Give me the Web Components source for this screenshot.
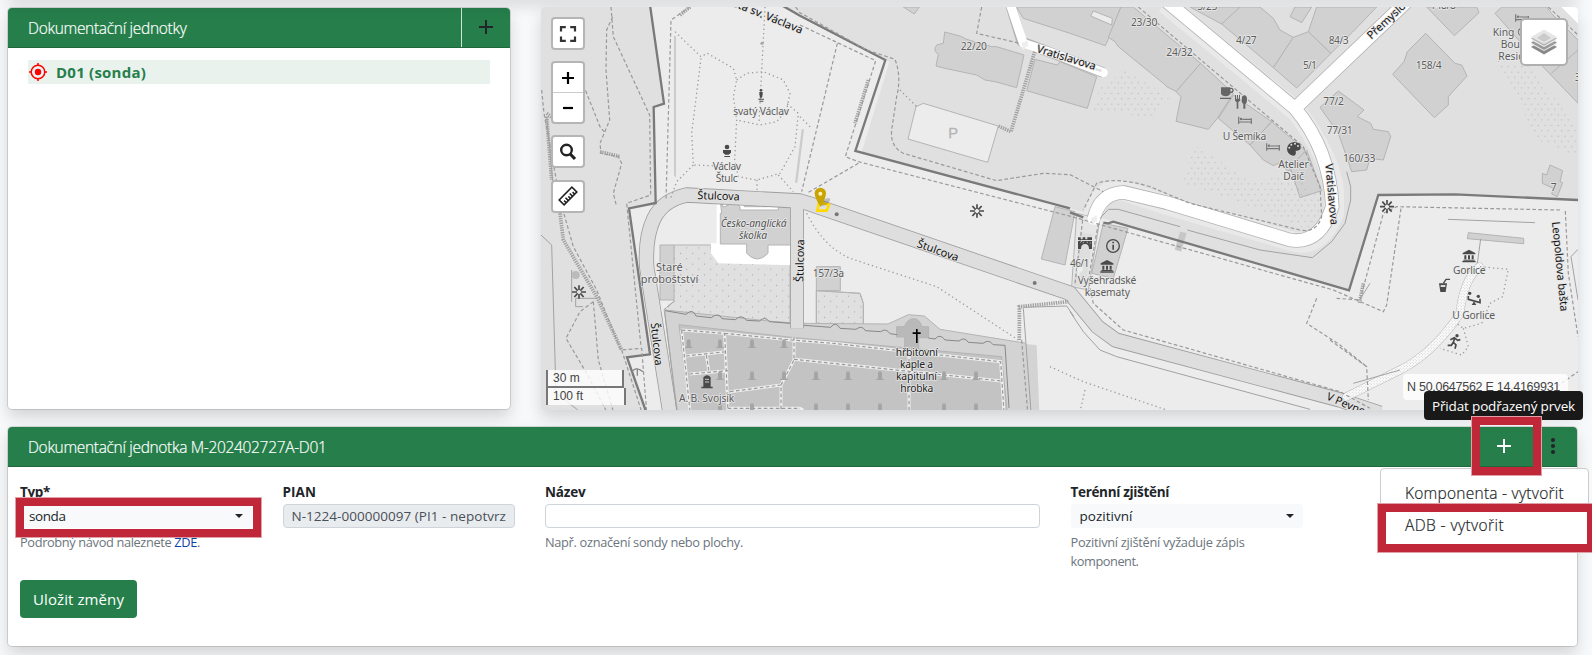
<!DOCTYPE html>
<html lang="cs">
<head>
<meta charset="utf-8">
<title>Dokumentační jednotky</title>
<style>
html,body{margin:0;height:100%}
body{background:#f8f9fa;font-family:"Open Sans","Noto Sans",sans-serif;color:#212529;overflow:hidden}
</style>
</head>
<body>
<record-page></record-page>

<template id="map-svg">
<svg viewBox="1623 21 3111 1209" preserveAspectRatio="none">
<defs>
<pattern id="dots" width="36" height="32" patternUnits="userSpaceOnUse"><circle cx="8" cy="8" r="1.8" fill="#999"/><circle cx="26" cy="24" r="1.8" fill="#999"/></pattern>
<pattern id="dots2" width="20" height="32" patternUnits="userSpaceOnUse"><circle cx="5" cy="8" r="1.7" fill="#a0a0a0"/><circle cx="15" cy="24" r="1.7" fill="#a0a0a0"/></pattern>
<pattern id="fine" width="9" height="9" patternUnits="userSpaceOnUse"><rect width="9" height="9" fill="#fafafa"/><circle cx="2" cy="2" r="1.4" fill="#bbb"/><circle cx="6.5" cy="6.5" r="1.4" fill="#bbb"/></pattern>
<g id="grave"><path d="M-6 10V-5a6 7 0 0 1 12 0V10h5v4h-22v-4z" fill="#a5a5a5"/></g>
<g id="bed" fill="none" stroke="#777" stroke-width="3.5"><path d="M-19-11V11M-19 5H19M19-6V11M-8-3h26"/><circle cx="-12" cy="-4" r="2"/></g>
<g id="museum" fill="#4a4a4a"><path d="M0-19 19-9V-5H-19V-9zM-14-2h6V10h-6zM-3-2h6V10h-6zM8-2h6V10h-6zM-17 11h34v3h-34zM-20 15h40v4h-40z"/></g>
<g id="fort" stroke="#4a4a4a" stroke-width="5"><path d="M0-20V-6M0 6V20M-21 0H-6M6 0H21M-14-15-4-4M4 4 14 15M14-15 4-4M-4 4-14 15"/></g>
<g id="gate"><text x="0" y="10" text-anchor="middle" font-size="28" fill="#222" stroke="#eee" stroke-width="4">≠</text></g>
</defs>
<rect x="1600" y="0" width="3200" height="1250" fill="#e0e0e0"/>
<!-- fortress interior -->
<path fill="#ececec" d="M1950 15 1992 311 1961 321 1967 609 1887 625 1950 1063 1881 1072 1940 1240H4740V600L4365 583 4135 585 4047 871 3340 665 3210 625 2566 453 2656 180 2345 15z"/>
<path fill="#ececec" d="M2656 180 2668 186 2585 456 2566 453z"/>
<!-- green plots -->
<g class="b">
<path fill="#e0e0e0" stroke="none" d="M2021 735H2370V968L2270 962 1990 930 2021 905z"/>
<path fill="url(#dots)" d="M2021 735H2370V968L2270 962 1990 930 2021 905z"/>
<path fill="#fff" stroke="none" d="M2150 605 2380 610V796L2155 790 2133 760V730H2150z"/>
<path d="M1980 735h42v165h-42z"/>
<path d="M2162 612H2168V620H2175q30-20 45 0v10h115v-10q20-12 45 0l-4 115h-72v25q-32 34-64 0v-28h-79V640h4z"/>
<path fill="#fff" d="M2233 605h70v15h-70z"/>
<path d="M2449 800h72v72h-72z"/><path fill="#e0e0e0" d="M2449 872 2580 880 2590 910V985L2449 977z"/><path fill="url(#dots)" d="M2449 872 2580 880 2590 910V985L2449 977z"/>
</g>
<!-- cemetery -->
<g class="b">
<path fill="#d3d3d3" d="M1993 930 2372 970 2400 970 2664 972 2725 944 2773 948 2820 988 3110 1035 3118 1240H2033z"/>
<path fill="#c3c3c3" d="M2037 974 2375 1012 3005 1070 3022 1240H2070z"/>
<path fill="#ececec" d="M3069 922 3200 918 3230 945 3330 1240H3093z" stroke="none"/>
<path fill="#d3d3d3" stroke="none" d="M3050 1030 3110 1035 3118 1240H3060z"/>
<path fill="#b9b9b9" d="M2690 980h23q10-24 28-24 18 0 25 24h20v33h-30v35h-42v-37h-24z"/>
</g>
<path class="l" d="M1995 932 2058 943q20-20 30 5l46 5q22-18 32 3l40 3q18-18 34 2l38 2q18-16 30 2l65 5M2400 975 2492 982q15-20 28 3l48 3q18-14 28 4l46 3q16-12 28 6l22 3M2785 1014l20 3q15-18 30 3l42 3q16-14 28 4l44 3q18-14 30 4l36 2 12 188" style="stroke:#888;stroke-width:3"/>
<g fill="none" stroke="#eee" stroke-width="9"><path d="M2045 990 2174 1000 2184 1235M2045 990 2070 1235M2058 1068 2178 1055M2068 1122 2185 1112M2119 1065 2127 1115M2174 1000 2375 1020 2500 1030 3002 1085 3012 1235M2382 1010V1080L2343 1155V1235M2190 1175 2343 1155M2382 1078 3005 1143M2727 1040V1235M2183 1225H2400L2410 1230"/></g>
<g class="d"><path d="M2045 990 2174 1000 2184 1235M2045 990 2070 1235M2058 1068 2178 1055M2068 1122 2185 1112M2119 1065 2127 1115M2174 1000 2375 1020 2500 1030 3002 1085 3012 1235M2382 1010V1080L2343 1155V1235M2190 1175 2343 1155M2382 1078 3005 1143M2727 1040V1235M2183 1225H2400M3065 1020 3083 1235"/></g>
<g><use href="#grave" x="2066" y="1030"/><use href="#grave" x="2160" y="1030"/><use href="#grave" x="2256" y="1030"/><use href="#grave" x="2352" y="1030"/><use href="#grave" x="2160" y="1126"/><use href="#grave" x="2256" y="1126"/><use href="#grave" x="2352" y="1126"/><use href="#grave" x="2160" y="1222"/><use href="#grave" x="2256" y="1222"/><use href="#grave" x="2448" y="1126"/><use href="#grave" x="2544" y="1126"/><use href="#grave" x="2640" y="1126"/><use href="#grave" x="2832" y="1126"/><use href="#grave" x="2928" y="1126"/><use href="#grave" x="2448" y="1222"/><use href="#grave" x="2544" y="1222"/><use href="#grave" x="2640" y="1222"/><use href="#grave" x="2832" y="1222"/><use href="#grave" x="2928" y="1222"/></g>
<!-- buildings north -->
<g class="b">
<path d="M2710 21 2743 42 2758 21z"/>
<path d="M2834 96 2880 108 2900 118 2975 140 2990 140 3072 165 3050 263 2985 245 2955 240 2930 225 2835 205 2808 198 2815 163q-18-12-5-28l20-5z"/>
<path d="M3105 178 3172 195 3180 185 3290 230 3262 325 3080 272z"/>
<path d="M3050 21 3363 21 3325 118 3316 137 3210 100 3070 55z"/>
<path d="M3363 21H3400L3602 190 3530 275 3500 260 3490 250 3355 140 3345 125 3325 112z"/>
<path d="M3602 190 3700 280 3652 355 3625 388 3528 364 3543 290 3528 275z"/>
<path d="M3700 285 3815 365 3750 435 3655 355zM3815 365 3915 450 3885 515 3860 510 3835 490 3820 497 3790 480 3750 435z"/><path d="M3870 500 3920 450 3965 572 3900 593z"/>
<path d="M3570 21H3740L3665 72z"/>
<path d="M3665 72 3720 21H3780L3820 55 3840 90 3880 112 3820 203z"/>
<path d="M3880 112 3925 95 3993 160 3890 264 3820 203z"/><path d="M3925 95 3950 21H4130L4057 97 3993 160z"/>
<path d="M3885 21H3935L3905 68 3870 50z"/><path fill="#ececec" d="M3280 33 3337 55 3335 75 3272 48z"/>
<path d="M4280 21H4430L4437 38 4363 107z"/>
<path d="M4277 100 4365 190 4385 195 4401 228 4345 290 4345 315 4303 353 4178 223 4212 185 4222 155z"/>
<path d="M4485 40 4505 21H4640L4654 40 4734 120V310L4600 170z"/><path d="M4654 220 4734 150" fill="none"/>
<path d="M3960 322 4015 273 4092 330 4072 350 4112 370 4120 388 4165 395 4172 410 4150 480 4110 475 4100 510 4055 515 4040 470 4015 400z"/>
<path d="M4627 520 4640 525 4650 495 4688 512 4680 545 4688 548 4672 590 4655 582 4660 565 4627 550z"/>
<path fill="#ececec" d="M2748 320 2770 310 2995 378 2963 487 2724 417z"/>
<path d="M3165 620 3225 635 3195 795 3124 777zM3310 670 3384 685 3340 835 3275 820z"/>
<path d="M3230 640 3300 655 3265 870 3215 860z" fill="#e6e6e6"/>
<path d="M4405 698 4571 715V731L4402 716z"/>
<path d="M2022 108h6v425l-6-8zM2405 388h7l-20 160h-7z" fill="#ccc" stroke="none"/>
</g>
<!-- planted ground -->
<path fill="url(#dots2)" d="M3375 210 3510 290 3460 355 3280 330 3300 265zM3585 435 3760 550 3880 510 3960 600 3970 680 3900 680 3700 600 3545 550zM4490 180 4590 200 4700 340 4734 400V470L4610 420 4540 270z"/>
<!-- roads with casing -->
<g fill="none" stroke-linejoin="round">
<g stroke="#9e9e9e"><path stroke-width="46" d="M2010 1240 1940 800Q1935 710 1962 655T2060 585L2400 603 2430 612 3210 880 3292 980 3347 1020 4020 1200 4140 1240"/><path stroke-width="42" d="M2391 610V985"/></g>
<g stroke="#dedede"><path stroke-width="41" d="M2010 1240 1940 800Q1935 710 1962 655T2060 585L2400 603 2430 612 3210 880 3292 980 3347 1020 4020 1200 4140 1240"/><path stroke-width="37" d="M2391 610V985M3238 860 3260 700"/></g>
<path stroke="#e9e9e9" stroke-width="60" d="M3278 650Q3300 560 3370 572L3500 615 3885 726Q3960 740 4002 640V570Q3990 470 3890 335L3495 10"/>
<path stroke="#c6c6c6" stroke-width="20" d="M3550 697 3534 752"/>
<g stroke="#b3b3b3"><path stroke-width="43" d="M3282 655Q3300 580 3370 577L3500 608 3870 720Q3960 735 3997 620Q3990 450 3885 325L3495 0M3885 325 4225 0"/><path stroke-width="31" d="M3030 10 3065 125 3310 218"/></g>
<g stroke="#fff" stroke-linecap="round"><path stroke-width="38" d="M3282 655Q3300 580 3370 577L3500 608 3870 720Q3960 735 3997 620Q3990 450 3885 325L3495 0M3885 325 4225 0M4690 0 4750 60"/><path stroke-width="27" d="M3030 10 3070 130 3175 165 3310 218"/></g>
<path stroke="#bbb" stroke-width="26" stroke-linecap="round" d="M4438 800Q4390 840 4380 940Q4300 1060 4200 1110L4040 1190"/><path stroke="url(#fine)" stroke-width="23" stroke-linecap="round" d="M4438 800Q4390 840 4380 940Q4300 1060 4200 1110L4040 1190"/>
</g>
<!-- ramparts -->
<path class="w" d="M1950 15 1992 311 1961 321 1967 609 1887 625 1950 1063 1881 1072 1940 1240M2335 10 2400 47 2656 180 2566 453 3210 625M3210 637 3250 652M3310 668 3325 670 3340 665 4047 871 4135 585 4365 583 4734 600"/>
<!-- thin outlines -->
<g class="l"><path d="M3300 655 3325 628 3355 628 3540 680M3562 690 3780 750 3937 773 3995 725 4035 670 4052 600V560L4040 515M3210 935 3250 995 3300 1050 3350 1070 3930 1228M4060 1150 4200 1110M4344 658 4605 668M4442 717 4432 790M3070 925 3093 1235M3070 922 3200 918 3222 950M1623 705 1655 735 1668 1180 1740 1235M1715 810V905M1727 895h65M1727 895v25h22M4713 770 4734 748M4713 770 4734 900M4085 890 4110 850M1640 350 1665 620M1994 935 2030 1230M1990 930 2021 905"/></g>
<!-- footpaths -->
<g class="d">
<path d="M1833 21 1840 110 1949 345 1952 585 1880 610 1923 1040M1838 50 1820 90 1818 210 1829 360 1800 430 1803 460 1855 470 1865 490 1840 580 1850 620M1750 255 1800 380 1812 395M1625 270 1632 340 1680 600 1720 740 1790 870 1862 1050 1925 1045 1940 1235M1780 905 1740 935 1698 1015 1760 1120 1820 1235M1780 905 1795 1080 1840 1235M1865 1050 1925 1235M2070 21 2013 60 1998 600M2387 21 2400 38 2600 150 2685 178Q2705 230 2690 290L2675 390Q2670 440 2710 460L2990 542 3130 520 3210 524 3310 575M2400 75 2627 182 2536 470 2575 485 3215 650 4000 870 4150 935 4160 915 4203 625M2512 130 2405 575M2575 490 2420 580M2945 21 2930 100 3060 130M3415 21 3910 440 3960 560 3965 650Q3950 700 3900 690L3570 610 3450 560Q3350 530 3290 550L3250 630M3248 660 3225 850M3295 670 3265 840 3280 910 3370 990 4020 1175 4110 1225M4680 630 4190 620 4150 640 4080 900 4010 895M4696 633 4705 820 4734 1010M3990 1020 4100 1100 4105 1200M3950 895 3920 970 4020 1035 4100 1100M4670 1160 4734 1115M4645 21 4734 105"/>
</g>
<g class="p"><path d="M2025 95 2103 170 2122 160 2200 205 2210 240 2200 290 2210 360 2204 480 2215 530 2270 540 2340 520 2385 440 2395 340 2360 310M2103 175 2075 400 2080 495 2200 500M2080 495 2030 545 2010 600M2210 240 2240 220 2290 215 2350 240 2370 280 2360 330 2330 365 2280 375 2210 360M2295 21 2285 215 2277 370M2335 525 2380 575M2271 540V575M2700 270 2750 320M2400 350 2435 385M2420 640Q2470 740 2550 775L2810 860 3055 1020M3150 1100 3250 1145 3500 1230M3255 1170 3240 1235M4440 800 4525 808 4508 890 4470 910 4445 970 4390 985 4370 970M4390 985 4405 1040 4385 1065 4320 1045"/></g>
<g class="s"><path d="M1640 350 1655 540M2605 240 2565 370M3104 155 3033 395 2995 378M1640 340 1680 370M1680 640 1690 720 1790 890 1865 1050M3058 1020V920L3205 905M4090 850 4078 910M1800 455 1860 470M2040 45 2070 21"/></g>
<!-- symbols -->
<g>
<use href="#fort" x="2931" y="633"/><use href="#fort" x="4161" y="620"/><use href="#fort" x="1737" y="876"/>
<use href="#museum" x="3321" y="799"/><use href="#museum" x="4407" y="768"/>
<use href="#bed" x="3735" y="361"/><use href="#bed" x="3819" y="441"/><use href="#bed" x="4566" y="54"/>
<g fill="#4a4a4a">
<circle cx="2283" cy="271" r="4"/><path d="M2278 276h10v7l-2 10h-6l-2-10zM2275 296h17v3h-17zM2278 302h12v3h-12z"/>
<circle cx="2181" cy="441" r="7"/><path d="M2169 450h24v8l-7 6h-10l-7-6zM2173 468h17v3h-17z"/><circle cx="2286" cy="130" r="5" fill="#aaa"/>
<path d="M2110 1160v-28q11-12 22 0v28zM2104 1160h34v5h-34z"/><path d="M2115 1138h12M2115 1146h12" stroke="#ccc" stroke-width="3"/>
<path d="M3234 747v-24h42v24h-9q0-15-12-15t-12 15zM3234 712h8v6h6v-6h8v6h6v-6h14v8h-42z"/><path d="M3240 727l6-3M3250 729v-4M3262 729v-4M3269 731l4-3" stroke="#ddd" stroke-width="2"/>
<circle cx="3339" cy="738" r="19" fill="none" stroke="#4a4a4a" stroke-width="4"/><path d="M3337 734h5v15h-5zM3337 725h5v5h-5z"/>
<path d="M3663 262h28v20q-5 7-14 7t-14-7zM3660 293h33v4h-33z" fill="#666"/><circle cx="3693" cy="271" r="6" fill="none" stroke="#666" stroke-width="4"/>
<g fill="#666"><path d="M3705 285h3v12h3v-12h3v12h3v-12h3v17l-5 5v19h-5v-19l-5-5z"/><ellipse cx="3733" cy="299" rx="8" ry="13"/><path d="M3730 308h6v18h-6z"/></g>
<path d="M3882 426q22 0 20 19-2 8-15 7 3 15-8 15-18-4-18-21 2-18 21-20z"/><g fill="#ddd"><circle cx="3868" cy="443" r="3"/><circle cx="3874" cy="434" r="3"/><circle cx="3885" cy="431" r="3"/><circle cx="3894" cy="438" r="3"/></g>
<path d="M2748 987h5v10h9v5h-9v27h-5v-27h-10v-5h10z" fill="#000"/>
<path d="M4317 850h24l-4 26h-16z"/><path d="M4330 850 4338 838H4350" fill="none" stroke="#4a4a4a" stroke-width="4"/><path d="M4322 855h14v6h-14z" fill="#ddd"/>
<circle cx="4409" cy="880" r="5"/><circle cx="4435" cy="889" r="5"/><path d="M4405 888v10l35 10v-12" fill="none" stroke="#4a4a4a" stroke-width="5"/><path d="M4422 904l7 11h-14z"/>
<circle cx="4371" cy="1007" r="5"/><path d="M4365 1013l-5 14 8 8-3 11M4360 1027l-6 9h-11M4351 1019l12-6 10 8 8-2" fill="none" stroke="#4a4a4a" stroke-width="5"/>
<path d="M1895 1117q12-20 34-2M1912 1105v22" fill="none" stroke="#888" stroke-width="4"/>
<circle cx="2510" cy="643" r="6" fill="#777"/><circle cx="3104" cy="849" r="6" fill="#777"/><circle cx="1727" cy="825" r="12" fill="#bbb"/>
</g>
<use href="#gate" x="3075" y="133"/><use href="#gate" x="3282" y="658"/><use href="#gate" x="3240" y="810"/><use href="#gate" x="1992" y="918"/>
<rect x="3286" y="206" width="20" height="8" rx="4" fill="#e0e0e0" transform="rotate(15 3296 210)"/>
</g>
<!-- labels -->
<g class="t">
<text x="2200" y="345" textLength="167">svatý Václav</text><text x="2138" y="511" textLength="85">Václav</text><text x="2147" y="547" textLength="66">Štulc</text>
<text x="2882" y="149" textLength="79">22/20</text><text x="3393" y="79" textLength="79">23/30</text><text x="3499" y="167" textLength="79">24/32</text><text x="3592" y="29" textLength="60">3/25</text><text x="3708" y="131" textLength="62">4/27</text><text x="3986" y="132" textLength="60">84/3</text><text x="3909" y="208" textLength="42">5/1</text>
<text x="3970" y="315" textLength="62">77/2</text><text x="3980" y="401" textLength="78">77/31</text><text x="4029" y="485" textLength="97">160/33</text><text x="4247" y="207" textLength="78">158/4</text><text x="4290" y="26" textLength="78">148/8</text><text x="4724" y="242">3</text><text x="4652" y="573">7</text>
<text x="3668" y="419" textLength="131">U Šemíka</text><text x="3835" y="504" textLength="91">Atelier</text><text x="3850" y="539" textLength="62">Daič</text>
<text x="4478" y="109">King Ch</text><text x="4502" y="145">Bouti</text><text x="4495" y="181">Reside</text>
<text x="2438" y="831" textLength="94">157/3a</text><text x="3210" y="801" textLength="58">46/1</text>
<text x="3233" y="852" textLength="176">Vyšehradské</text><text x="3254" y="888" textLength="136">kasematy</text>
<text x="4359" y="822" textLength="98">Gorlice</text><text x="4357" y="958" textLength="128">U Gorlice</text>
<text x="2037" y="1205" textLength="166">A. B. Svojsík</text>
<text x="1968" y="812" font-size="33" textLength="80">Staré</text><text x="1922" y="850" font-size="33" textLength="173">proboštství</text>
</g>
<g class="t" font-style="italic" style="fill:#555"><text x="2162" y="680" textLength="198">Česko-anglická</text><text x="2217" y="716" textLength="84">školka</text></g>
<g class="t k"><text x="2687" y="1068" textLength="127">hřbitovní</text><text x="2700" y="1104" textLength="99">kaple a</text><text x="2688" y="1140" textLength="123">kapitulní</text><text x="2701" y="1176" textLength="99">hrobka</text></g>
<g class="t r">
<text transform="translate(2092 597) rotate(2)" textLength="127" lengthAdjust="spacingAndGlyphs">Štulcova</text>
<text transform="translate(1952 970) rotate(84)" textLength="128" lengthAdjust="spacingAndGlyphs">Štulcova</text>
<text transform="translate(2410 846) rotate(-89)" textLength="128" lengthAdjust="spacingAndGlyphs">Štulcova</text>
<text transform="translate(2749 740) rotate(20)" textLength="130" lengthAdjust="spacingAndGlyphs">Štulcova</text>
<text transform="translate(2197 18) rotate(22)" textLength="222" lengthAdjust="spacingAndGlyphs">sta sv. Václava</text>
<text transform="translate(3108 156) rotate(17)" textLength="184" lengthAdjust="spacingAndGlyphs">Vratislavova</text>
<text transform="translate(3976 492) rotate(85)" textLength="184" lengthAdjust="spacingAndGlyphs">Vratislavova</text>
<text transform="translate(4114 119) rotate(-43)">Přemyslova</text>
<text transform="translate(3977 1198) rotate(23)">V Pevnosti</text>
<text transform="translate(4656 666) rotate(84.500)" textLength="270" lengthAdjust="spacingAndGlyphs">Leopoldova bašta</text>
</g>
<text x="2845" y="415" font-size="44" font-family="Liberation Sans" fill="#b5b5b5" stroke="#b5b5b5" stroke-width="1">P</text>
<!-- selected location -->
<path d="M2457 607 2487 614 2480 632 2452 632z" fill="none" stroke="#ffd900" stroke-width="8"/>
<ellipse cx="2476" cy="606" rx="17" ry="8" fill="#0003" transform="rotate(-35 2476 606)"/>
<path d="M2462 621Q2444 594 2444 580A17 17 0 0 1 2478 580Q2478 594 2462 621z" fill="#c9a400"/><circle cx="2461" cy="581" r="6" fill="#fff4c0"/>
</svg>
</template>

<script>
const UI = {
  plus: '<svg viewBox="0 0 16 16" width="16" height="16"><path d="M8 1v14M1 8h14" stroke="currentColor" stroke-width="2" fill="none"/></svg>',
  caret: '<svg viewBox="0 0 10 5" width="8" height="4"><path d="M0 0h10L5 5z" fill="#212529"/></svg>'
};
function define(name, html, setup) {
  customElements.define(name, class extends HTMLElement {
    connectedCallback() {
      if (this.shadowRoot) return;
      this.attachShadow({mode: 'open'}).innerHTML = html;
      if (setup) setup(this, this.shadowRoot);
    }
  });
}

define('record-page', `
<style>
:host{display:flex;flex-direction:column;gap:17px;box-sizing:border-box;width:1592px;height:655px;padding:8px 15px 5px 8px;position:relative;overflow:hidden;background:#f8f9fa}
.sky{position:absolute;left:8px;right:15px;top:-12px;height:10px;box-shadow:0 6px 16px rgba(0,0,0,.19)}
.top{display:grid;grid-template-columns:502px 1fr;column-gap:31px;height:402px}
.top>ui-card{height:401px}
ui-card{--pad:12px 20px}
map-view{margin:-1px -1px 0 0}
.body{padding:17px 12px 8px;display:grid;grid-template-columns:232px 232px 495px 232px;column-gap:30.5px}
.save{padding:0 12px;display:flex}
button{height:38px;width:117px;background:#267f4b;color:#fff;border:0;border-radius:4px;font:400 15px "Open Sans",sans-serif;padding:0 0 1px}
a{color:#0d3fa6}
.menuwrap{position:absolute;left:1380px;top:468px}
.tip{position:absolute;left:1424px;top:391px}
.mark{position:absolute;box-sizing:border-box;border:9px solid #c0283a;outline:1px solid #e0a0a8;outline-offset:-1px}
</style>
<div class="sky"></div>
<div class="top">
<ui-card><fit-text slot="title" w="158.5">Dokumentační jednotky</fit-text><icon-slot slot="tools"></icon-slot><unit-row></unit-row></ui-card>
<map-view></map-view>
</div>
<ui-card style="height:219px">
<fit-text slot="title" w="298.5">Dokumentační jednotka M-202402727A-D01</fit-text>
<more-tools slot="tools"></more-tools>
<div slot="wide" class="body">
<form-field kind="select" w="36.5" value="sonda"><fit-text slot="label" w="30">Typ*</fit-text><fit-text slot="help" w="180">Podrobný návod naleznete <a>ZDE</a>.</fit-text></form-field>
<form-field kind="locked" w="214.5" value="N-1224-000000097 (PI1 - nepotvrz"><fit-text slot="label" w="33.5">PIAN</fit-text></form-field>
<form-field kind="input" value=""><fit-text slot="label" w="40.5">Název</fit-text><fit-text slot="help" w="198">Např. označení sondy nebo plochy.</fit-text></form-field>
<form-field kind="select" w="53" value="pozitivní"><fit-text slot="label" w="98.5">Terénní zjištění</fit-text><fit-text slot="help" w="174">Pozitivní zjištění vyžaduje zápis</fit-text><fit-text slot="help" w="68">komponent.</fit-text></form-field>
</div>
<div slot="wide" class="save"><button><fit-text w="91">Uložit změny</fit-text></button></div>
</ui-card>
<drop-menu class="menuwrap"></drop-menu>
<tool-tip class="tip"></tool-tip>
<div class="mark" style="left:15px;top:497px;width:247px;height:41px"></div>
<div class="mark" style="left:1471px;top:416px;width:71px;height:60px"></div>
<div class="mark" style="left:1377px;top:503px;width:219px;height:50px"></div>
`);

define('ui-card', `
<style>
:host{display:block;background:#fff;border-radius:4px;box-shadow:0 8px 16px rgba(0,0,0,.15),0 0 0 1px rgba(0,0,0,.12)}
header{height:40px;box-sizing:border-box;border-bottom:1px solid #20693f;background:#267f4b;border-radius:4px 4px 0 0;display:flex;align-items:stretch;justify-content:space-between;padding-left:20px;color:#fff;font-weight:300;font-size:15.5px}
.t{display:flex;align-items:center;-webkit-text-stroke:.2px #fff}
.b{padding:var(--pad)}
</style>
<header><div class="t"><slot name="title"></slot></div><slot name="tools"></slot></header>
<slot name="wide"></slot><div class="b"><slot></slot></div>`);

define('icon-slot', `
<style>:host{display:flex;align-items:center;justify-content:center;width:48px;border-left:1px solid #d3e5da;color:#212529;padding-bottom:2px}</style>${UI.plus}`);

define('more-tools', `
<style>:host{display:flex}.p{display:flex;align-items:center;justify-content:center;width:48px;padding:0 0 1px 3px;color:#fff;border-left:1px solid #cfe0d6;border-right:1px solid #267f4b}.m{width:48px;display:flex;align-items:center;justify-content:center;padding-bottom:2px}</style>
<div class="p">${UI.plus}</div><div class="m"><svg width="6" height="18" viewBox="0 0 6 18" fill="#212529"><circle cx="3" cy="3" r="2.100"/><circle cx="3" cy="9" r="2.100"/><circle cx="3" cy="15" r="2.100"/></svg></div>`);

define('unit-row', `
<style>:host{display:flex;align-items:center;height:24px;background:#e9f2ed;color:#267f4b;font-weight:700;font-size:15px;gap:9px;padding-left:1px}svg{flex:none}</style>
<svg width="18" height="18" viewBox="0 0 18 18"><circle cx="9" cy="9" r="6.800" fill="none" stroke="#f00" stroke-width="1.500"/><circle cx="9" cy="9" r="3.200" fill="#f00"/><path d="M9 0v3M9 15v3M0 9h3M15 9h3" stroke="#f00" stroke-width="1.600"/></svg><fit-text w="90">D01 (sonda)</fit-text>`);

define('form-field', `
<style>
:host{display:block;height:88px;font-size:13px}
.l{font-weight:700;height:20px;line-height:17px;font-size:13.5px}
.c{height:24px;box-sizing:border-box;border-radius:4px;display:flex;align-items:center;justify-content:space-between;padding:0 9px 1px;font-size:13.5px}
.select{background:#f8f9fa;padding-bottom:0}
.input{border:1px solid #ced4da}
.locked{border:1px solid #ced4da;background:#e9ecef;color:#495057;padding-left:8px}
.h{color:#6c757d;line-height:19px;font-size:12.8px;margin-top:5px;display:flex;flex-direction:column;align-items:flex-start}
</style>
<div class="l"><slot name="label"></slot></div><div class="c"></div><div class="h"><slot name="help"></slot></div>`,
(el, root) => {
  const c = root.querySelector('.c'), kind = el.getAttribute('kind'), v = el.getAttribute('value');
  c.classList.add(kind);
  c.innerHTML = (v ? `<fit-text w="${el.getAttribute('w')}">${v}</fit-text>` : '') + (kind === 'select' ? UI.caret : '');
});

define('drop-menu', `
<style>:host{display:block;box-sizing:border-box;width:209px;height:82px;background:#fff;border:1px solid #ccc;border-radius:4px;padding:8px 24px;font-size:15.5px;font-weight:300;color:#212529;-webkit-text-stroke:.2px #212529}
div{height:32px;display:flex;align-items:center}</style>
<div><fit-text w="159">Komponenta - vytvořit</fit-text></div><div><fit-text w="99">ADB - vytvořit</fit-text></div>`);

define('tool-tip', `
<style>:host{display:flex;align-items:center;justify-content:center;width:159px;height:29px;background:#191919;border-radius:4px;color:#fff;font-size:13.5px}</style><fit-text w="143">Přidat podřazený prvek</fit-text>`);

define('map-view', `
<style>
:host{display:block;position:relative;border-radius:4px;box-shadow:0 8px 16px rgba(0,0,0,.15);height:403px}
.clip{position:absolute;inset:0;overflow:hidden;border-radius:4px}
.clip>svg{display:block;width:100%;height:100%;font-family:"Noto Sans",sans-serif}
.b>*{stroke:#b4b4b4;stroke-width:3}
.b>[stroke=none]{stroke:none}
.b>:not([fill]){fill:#d1d1d1}
.w{fill:none;stroke:#7a7a7a;stroke-width:7}
.l{fill:none;stroke:#a2a2a2;stroke-width:3}
.d{fill:none;stroke:#999;stroke-width:3.6;stroke-dasharray:11 7}
.p{fill:none;stroke:#999;stroke-width:3.8;stroke-dasharray:4 9}
.s{fill:none;stroke:#a0a0a0;stroke-width:11;stroke-dasharray:4 3}
.t{font-size:31px;fill:#5c5c5c;stroke:#eeeeeecc;stroke-width:5px;paint-order:stroke;stroke-linejoin:round}
.k{fill:#222}.r{fill:#111;stroke:#e4e4e4;font-size:33px;font-weight:400}
.ctl{position:absolute;left:10px;display:flex;flex-direction:column;width:30px;background:#fff;border:2px solid #b5b5b5;border-radius:4px}
.ctl>i{height:29px;display:flex;align-items:center;justify-content:center}
.ctl>i+i{border-top:1px solid #ccc}
.layers{position:absolute;right:10px;top:10.5px;width:44px;height:44px;background:#fff;border:2px solid #b0b0b0;border-radius:5px;display:flex;align-items:center;justify-content:center}
.scale{position:absolute;left:5px;bottom:5px;font:12px/15px "Liberation Sans",sans-serif;color:#444}
.scale div{box-sizing:border-box;border:2px solid #777;border-top:0;background:#fffc;width:78px;height:18px;padding-left:5px;line-height:17px}
.scale div+div{border-top:0;border-bottom:0;width:80px;height:17px}
.pos{position:absolute;left:862px;top:367px;width:165px;height:26px;box-sizing:border-box;border-radius:4px;background:#fffc;color:#444;font:12.5px/26px "Liberation Sans",sans-serif;padding-left:4px}
</style>
<div class="clip"></div>
<div class="ctl" style="top:10px"><i><svg width="18" height="18" viewBox="0 0 18 18"><path d="M2 6.500V2.200h4.800M11.200 2.200H16v4.300M16 11.500v4.300h-4.800M6.800 15.800H2v-4.300" fill="none" stroke="#333" stroke-width="2.200"/></svg></i></div>
<div class="ctl" style="top:54px"><i><svg width="14" height="14"><path d="M7 1v12M1 7h12" stroke="#000" stroke-width="2.200"/></svg></i><i><svg width="14" height="14"><path d="M2 7h10" stroke="#000" stroke-width="2.200"/></svg></i></div>
<div class="ctl" style="top:128px"><i><svg width="18" height="18" viewBox="0 0 18 18"><circle cx="7.500" cy="7" r="5.300" fill="none" stroke="#222" stroke-width="2.400"/><path d="M11.200 11 16 16" stroke="#222" stroke-width="3.200"/></svg></i></div>
<div class="ctl" style="top:172.500px"><i><svg width="20" height="20" viewBox="0 0 20 20"><g transform="rotate(-45 10 10)" fill="none" stroke="#222" stroke-width="1.600"><rect x="1" y="6.500" width="18" height="7"/><path d="M4 13.500v-3M7 13.500v-4M10 13.500v-3M13 13.500v-4M16 13.500v-3"/></g></svg></i></div>
<div class="layers"><svg width="26" height="26" viewBox="0 0 26 26"><path d="M13 10 26 18 13 25.500 0 18z" fill="#8a8a8a"/><path d="M13 7 26 15 13 22 0 15z" fill="#e8e8e8"/><path d="M13 5.500 26 13.500 13 21 0 13.500z" fill="#999"/><path d="M13 3 26 11 13 18 0 11z" fill="#eee"/><path d="M13 1.500 26 9.500 13 17 0 9.500z" fill="#b8b8b8"/><path d="M13 .5 26 8 13 15 0 8z" fill="#e6e6e6"/><path d="M13 4 20 9 13 13 6 9z" fill="#cacaca"/></svg></div>
<div class="scale"><div>30 m</div><div>100 ft</div></div>
<div class="pos"><fit-text w="153">N 50.0647562 E 14.4169931</fit-text></div>`,
(el, root) => root.querySelector('.clip').append(document.getElementById('map-svg').content.cloneNode(true)));

/* Keeps a line at its nominal width by spreading the difference over its letters. */
define('fit-text', `<style>:host{display:inline-block;white-space:pre}</style><slot></slot>`, el => {
  const want = parseFloat(el.getAttribute('w')), has = el.getBoundingClientRect().width;
  if (want && has) el.style.letterSpacing = (want - has) / el.textContent.length + 'px';
});
</script>
</body>
</html>
